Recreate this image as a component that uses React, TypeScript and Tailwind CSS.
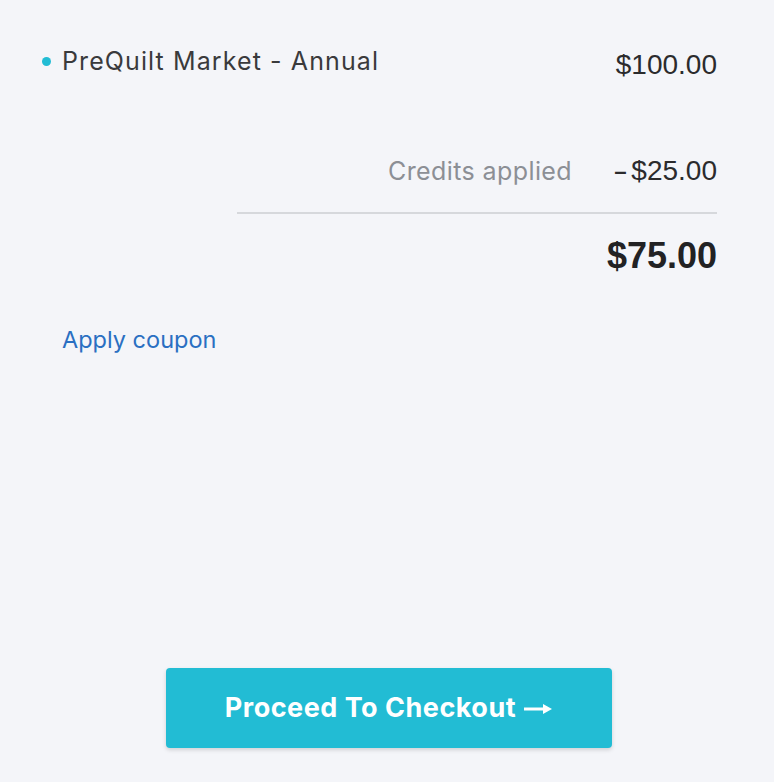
import React from "react";

export default function App() {
  const mono = { fontFamily: "'Liberation Sans', Arial, sans-serif" };
  return (
    <div className="min-h-[782px] w-full bg-[#f4f5f9] flex flex-col" style={{ fontFamily: "Inter, 'Noto Sans', sans-serif" }}>
      <div className="pl-[42px] pr-[57px] pt-[44px]">
        <div className="flex items-start justify-between">
          <div className="flex items-center">
            <span className="w-[9px] h-[9px] rounded-full bg-[#22bcd4] mr-[11px]" />
            <span className="text-[25px] leading-[34px] tracking-[1.1px] text-[#3a3a3c]">PreQuilt Market - Annual</span>
          </div>
          <span className="mt-[3px] text-[28px] leading-[36px] text-[#2b2b2d]" style={mono}>$100.00</span>
        </div>

        <div className="mt-[70px] flex items-center justify-end gap-[41px]">
          <span className="text-[25px] leading-[32px] tracking-[0.4px] text-[#8c8f95]">Credits applied</span>
          <span className="text-[28px] leading-[36px] text-[#2b2b2d]" style={mono}>
            <span className="inline-block origin-left scale-x-[1.6] mr-[9px]">-</span>$25.00
          </span>
        </div>

        <div className="mt-[23px] ml-auto w-[480px] h-[2px] bg-[#d6d8dc]" />

        <div className="mt-[20px] flex justify-end">
          <span className="text-[36px] leading-[44px] font-bold text-[#222224]" style={mono}>$75.00</span>
        </div>

        <div className="mt-[46px] pl-[20px]">
          <span className="text-[23.5px] leading-[32px] text-[#2a6fc2]">Apply coupon</span>
        </div>
      </div>

      <div className="mt-auto pb-[34px] flex justify-center pl-[3px]">
        <button className="w-[446px] h-[80px] rounded-[4px] bg-[#22bcd4] shadow-[0_2px_4px_rgba(0,0,0,0.15)] flex items-center justify-center gap-[8px] text-white text-[27px] font-bold tracking-[0.5px]">
          <span>Proceed To Checkout</span>
          <svg width="28" height="12" viewBox="0 0 28 12" className="mt-[2px]">
            <line x1="0" y1="6" x2="22" y2="6" stroke="white" strokeWidth="3" />
            <polygon points="19,1 28,6 19,11" fill="white" />
          </svg>
        </button>
      </div>
    </div>
  );
}
